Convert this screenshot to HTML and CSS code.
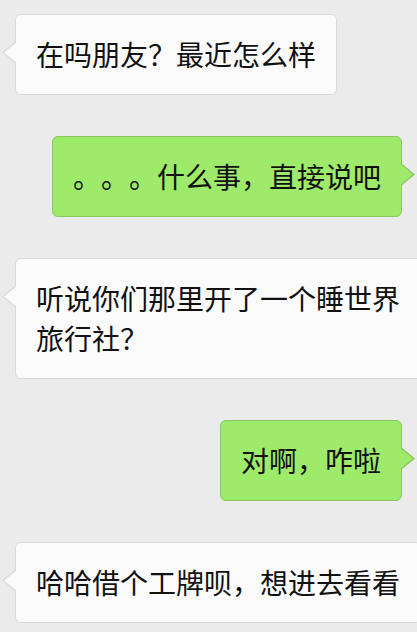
FILE: index.html
```html
<!DOCTYPE html>
<html lang="zh-CN">
<head>
    <meta charset="UTF-8">
    <meta name="viewport" content="width=device-width, initial-scale=1.0">
    <title>聊天</title>
    <link rel="stylesheet" href="styles.css">
</head>
<body>
    <div class="chat">
        <div class="bubble left">在吗朋友？最近怎么样</div>
        <div class="bubble right">。。。什么事，直接说吧</div>
        <div class="bubble left">听说你们那里开了一个睡世界旅行社？</div>
        <div class="bubble right">对啊，咋啦</div>
        <div class="bubble left">哈哈借个工牌呗，想进去看看</div>
    </div>
</body>
</html>
```
FILE: styles.css
```css
html, body {
    margin: 0;
    padding: 0;
    overflow: hidden;
}
body {
    font-family: "Noto Sans CJK SC", "Noto Sans", sans-serif;
    background-color: #ebebeb;
    color: #111;
    height: 632px;
}
.chat {
    display: flex;
    flex-direction: column;
    gap: 41px;
    padding-top: 14px;
}
.bubble {
    position: relative;
    width: max-content;
    max-width: 370px;
    padding: 19px 20px 20px;
    font-size: 28px;
    line-height: 40px;
    text-spacing-trim: space-all;
    border-radius: 6px;
    border: 1px solid;
}
.left {
    align-self: flex-start;
    margin-left: 15px;
    background-color: #fbfbfb;
    border-color: #dadada;
}
.right {
    align-self: flex-end;
    margin-right: 15px;
    background-color: #9eea6a;
    border-color: #88c85c;
}
/* bubble tails */
.bubble::before,
.bubble::after {
    content: "";
    position: absolute;
    top: 26px;
    width: 14px;
    height: 23px;
}
.bubble::after {
    top: 27px;
    width: 13px;
    height: 21px;
}
.left::before {
    left: -14px;
    background-color: #dadada;
    clip-path: polygon(100% 0, 0 50%, 100% 100%);
}
.left::after {
    left: -12px;
    background-color: #fbfbfb;
    clip-path: polygon(100% 0, 0 50%, 100% 100%);
}
.right::before {
    right: -14px;
    background-color: #88c85c;
    clip-path: polygon(0 0, 100% 50%, 0 100%);
}
.right::after {
    right: -12px;
    background-color: #9eea6a;
    clip-path: polygon(0 0, 100% 50%, 0 100%);
}
```
